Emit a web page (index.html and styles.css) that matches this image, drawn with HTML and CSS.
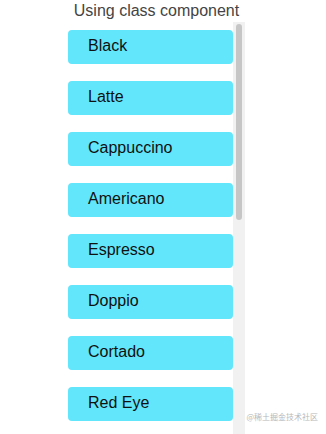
FILE: index.html
```html
<!DOCTYPE html>
<html>
<head>
<meta charset="utf-8">
<link rel="stylesheet" href="styles.css">
</head>
<body>
<div class="app">
  <div class="title">Using class component</div>
  <div class="frame">
    <div class="list">
      <div class="item">Black</div>
      <div class="item">Latte</div>
      <div class="item">Cappuccino</div>
      <div class="item">Americano</div>
      <div class="item">Espresso</div>
      <div class="item">Doppio</div>
      <div class="item">Cortado</div>
      <div class="item">Red Eye</div>
      <div class="item">Galao</div>
      <div class="item">Lungo</div>
      <div class="item">Macchiato</div>
      <div class="item">Mocha</div>
      <div class="item">Ristretto</div>
      <div class="item">Flat White</div>
      <div class="item">Affogato</div>
      <div class="item">Café au Lait</div>
      <div class="item">Irish</div>
    </div>
    <div class="track"><div class="thumb"></div></div>
  </div>
</div>
<div class="watermark">@稀土掘金技术社区</div>
</body>
</html>
```
FILE: styles.css
```css
html, body {
  margin: 0;
  padding: 0;
  background: #fff;
  overflow: hidden;
}
body {
  font-family: "Liberation Sans", Arial, sans-serif;
}
.app {
  width: 177px;
  margin-left: 68px;
}
.title {
  text-align: center;
  font-size: 16px;
  line-height: 22px;
  height: 22px;
  color: #444;
  white-space: nowrap;
}
.frame {
  display: flex;
  height: 412px;
}
.list {
  width: 165px;
  height: 100%;
  overflow-y: scroll;
  scrollbar-width: none;
  padding-top: 8px;
  box-sizing: border-box;
  display: flex;
  flex-direction: column;
  gap: 17px;
}
.list::-webkit-scrollbar {
  display: none;
}
.track {
  width: 12px;
  height: 100%;
  background: #f1f1f1;
  padding: 2px 3px;
  box-sizing: border-box;
}
.thumb {
  height: 196px;
  background: #c6c6c6;
  border-radius: 3px;
}
.item {
  flex: none;
  height: 34px;
  background: #61e6fb;
  border-radius: 4px;
  padding-left: 20px;
  font-size: 16px;
  line-height: 32px;
  color: #111;
}
.watermark {
  position: absolute;
  right: 8px;
  bottom: 12px;
  font-family: "Noto Sans CJK SC", sans-serif;
  font-size: 8px;
  color: #b8b8b8;
}
```
